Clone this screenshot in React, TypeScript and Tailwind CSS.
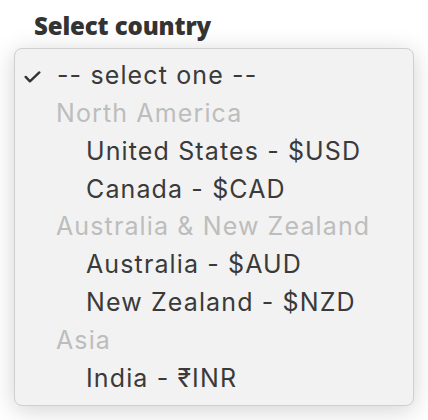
type Row = { label: string; kind: 'placeholder' | 'group' | 'option' };

const rows: Row[] = [
  { label: '-- select one --', kind: 'placeholder' },
  { label: 'North America', kind: 'group' },
  { label: 'United States - $USD', kind: 'option' },
  { label: 'Canada - $CAD', kind: 'option' },
  { label: 'Australia & New Zealand', kind: 'group' },
  { label: 'Australia - $AUD', kind: 'option' },
  { label: 'New Zealand - $NZD', kind: 'option' },
  { label: 'Asia', kind: 'group' },
  { label: 'India - ₹INR', kind: 'option' },
];

export default function App() {
  return (
    <div className="w-[428px] h-[420px] bg-white overflow-hidden px-[14px] pt-[11px]">
      <h2 className="ml-[20px] h-[37px] text-[24px] font-extrabold text-[#333] font-['Open_Sans',sans-serif] leading-[30px] tracking-[-0.005em]">
        Select country
      </h2>
      <div className="w-[400px] h-[358px] rounded-[8px] border border-[#cfcfcf] bg-[#f2f2f2] shadow-[0_4px_24px_rgba(0,0,0,0.18)] pt-[8px] font-['Inter',sans-serif] text-[25px] tracking-[0.045em]">
        {rows.map((r) => (
          <div key={r.label} className="h-[37.8px] flex items-center">
            {r.kind === 'placeholder' && (
              <svg viewBox="0 0 18 13" className="w-[17px] h-[12px] ml-[9px] mr-[16px] mt-[2px]">
                <path d="M1.6 6.4 L6.2 11.2 L16.4 1.6" fill="none" stroke="#333" strokeWidth="2.6" strokeLinecap="round" strokeLinejoin="round" />
              </svg>
            )}
            <span
              className={
                r.kind === 'group'
                  ? 'ml-[41px] text-[#bdbdbd]'
                  : r.kind === 'option'
                  ? 'ml-[71px] text-[#3a3a3a]'
                  : 'text-[#3a3a3a]'
              }
            >
              {r.label}
            </span>
          </div>
        ))}
      </div>
    </div>
  );
}
